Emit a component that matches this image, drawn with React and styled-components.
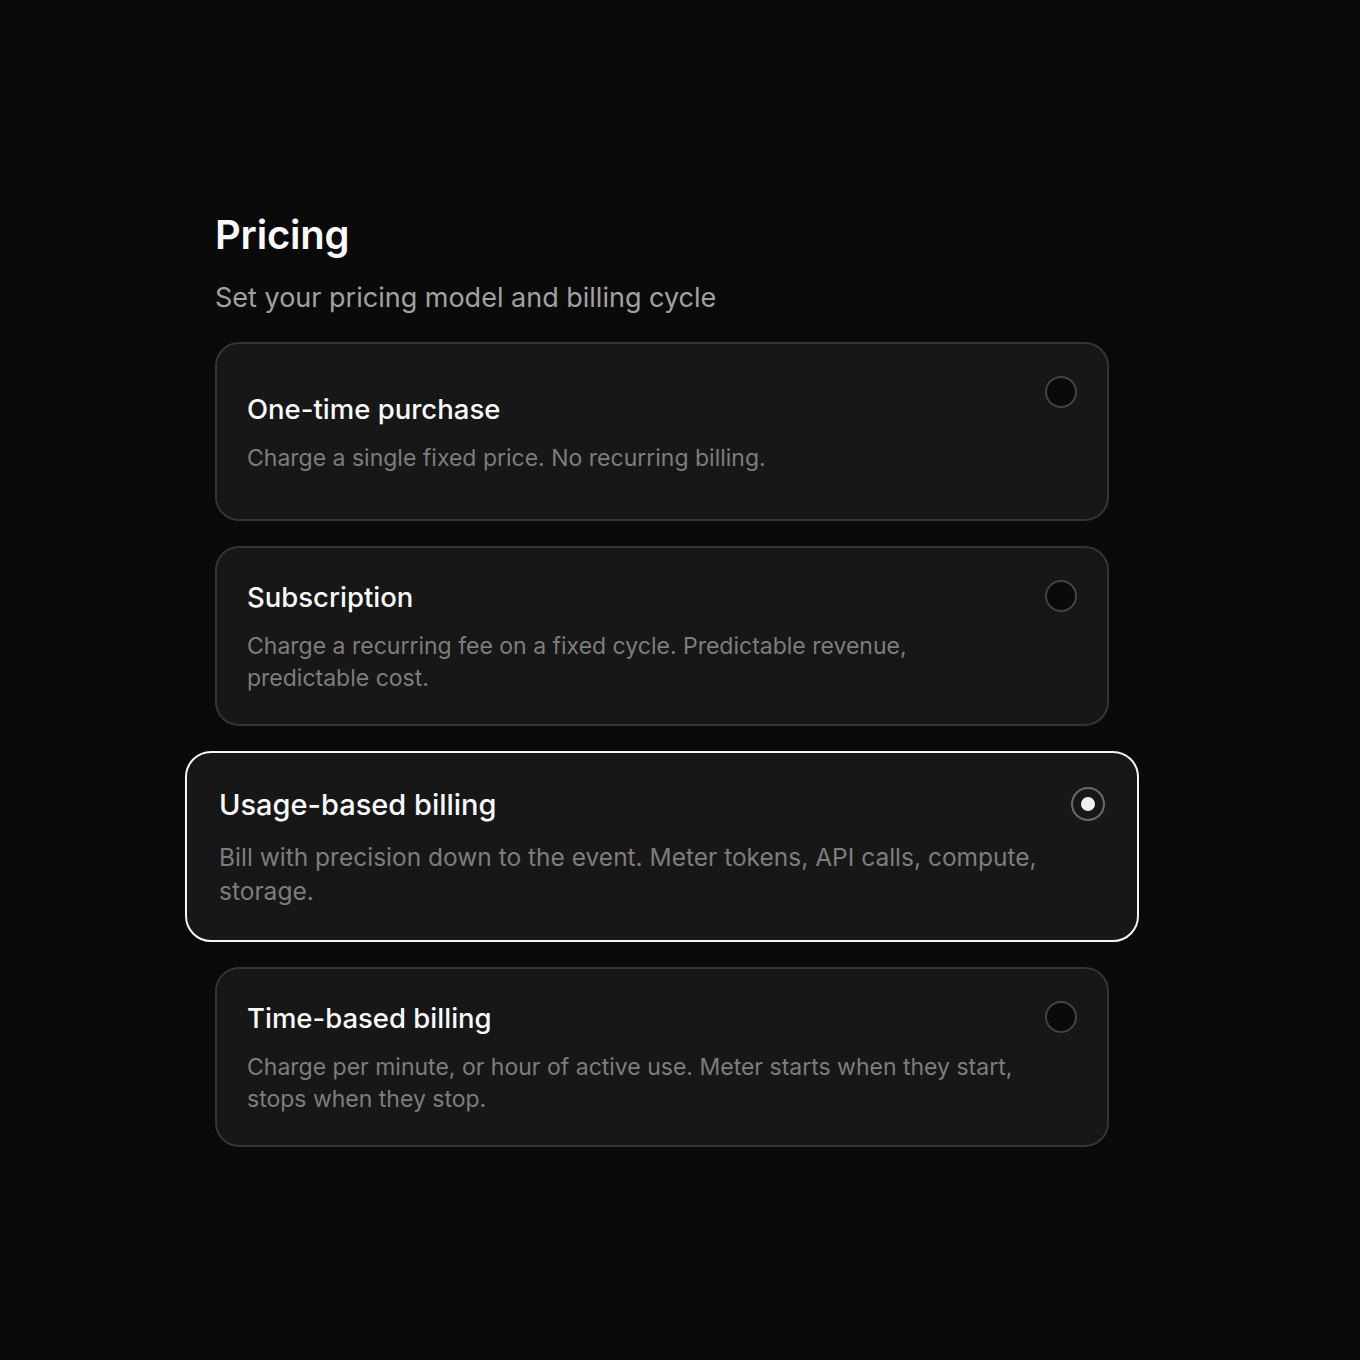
import React, { useState } from "react";
import styled, { createGlobalStyle, css } from "styled-components";

const GlobalStyle = createGlobalStyle`
  html, body {
    margin: 0;
    background: #0a0a0a;
  }
  body {
    font-family: Inter, "Noto Sans", sans-serif;
    -webkit-font-smoothing: antialiased;
  }
`;

const Page = styled.div`
  min-height: 1360px;
  padding: 211px 0 0 215px;
  box-sizing: border-box;
`;

const Section = styled.section`
  width: 894px;
`;

const Heading = styled.h1`
  margin: 0;
  font-size: 40px;
  line-height: 48px;
  font-weight: 600;
  color: #fafafa;
  letter-spacing: -0.2px;
`;

const Subtitle = styled.p`
  margin: 22px 0 27px;
  font-size: 27px;
  line-height: 34px;
  color: #a1a1a1;
`;

const List = styled.div`
  display: flex;
  flex-direction: column;
  gap: 25px;
`;

const Card = styled.label`
  display: flex;
  align-items: flex-start;
  gap: 24px;
  box-sizing: border-box;
  min-height: 179px;
  padding: 31px 30px 30px;
  border: 2px solid #353535;
  border-radius: 24px;
  background: #171717;
  cursor: pointer;

  ${({ $active }) =>
    $active &&
    css`
      margin: 0 -30px;
      min-height: 191px;
      padding: 33px 32px 32px;
      border-color: #f5f5f5;
      border-radius: 26px;
    `}
`;

const Body = styled.div`
  flex: 1;
  align-self: stretch;
  display: flex;
  flex-direction: column;
  justify-content: center;
`;

const Title = styled.h3`
  margin: 0 0 15px;
  font-size: 27.5px;
  line-height: 36px;
  font-weight: 500;
  color: #fafafa;

  ${({ $active }) =>
    $active &&
    css`
      margin-bottom: 16px;
      font-size: 29px;
      line-height: 38px;
    `}
`;

const Desc = styled.p`
  margin: 0;
  max-width: 775px;
  font-size: 23px;
  line-height: 32px;
  color: #7d7d7d;

  ${({ $active }) =>
    $active &&
    css`
      max-width: 840px;
      font-size: 24.5px;
      line-height: 34px;
    `}
`;

const Radio = styled.span`
  flex: none;
  position: relative;
  width: 32px;
  height: 32px;
  margin-top: 1px;
  box-sizing: border-box;
  border: 2px solid #444;
  border-radius: 50%;
  background: #0a0a0a;

  ${({ $active }) =>
    $active &&
    css`
      width: 34px;
      height: 34px;
      border-color: #6a6a6a;
      background: #171717;

      &::after {
        content: "";
        position: absolute;
        top: 50%;
        left: 50%;
        width: 14px;
        height: 14px;
        border-radius: 50%;
        background: #f0f0f0;
        transform: translate(-50%, -50%);
      }
    `}
`;

const options = [
  {
    id: "one-time",
    title: "One-time purchase",
    desc: "Charge a single fixed price. No recurring billing.",
  },
  {
    id: "subscription",
    title: "Subscription",
    desc: "Charge a recurring fee on a fixed cycle. Predictable revenue, predictable cost.",
  },
  {
    id: "usage",
    title: "Usage-based billing",
    desc: "Bill with precision down to the event. Meter tokens, API calls, compute, storage.",
  },
  {
    id: "time",
    title: "Time-based billing",
    desc: "Charge per minute, or hour of active use. Meter starts when they start, stops when they stop.",
  },
];

const App = () => {
  const [selected, setSelected] = useState("usage");

  return (
    <Page>
      <GlobalStyle />
      <Section>
        <Heading>Pricing</Heading>
        <Subtitle>Set your pricing model and billing cycle</Subtitle>
        <List>
          {options.map((o) => {
            const active = o.id === selected;
            return (
              <Card key={o.id} $active={active} onClick={() => setSelected(o.id)}>
                <Body>
                  <Title $active={active}>{o.title}</Title>
                  <Desc $active={active}>{o.desc}</Desc>
                </Body>
                <Radio $active={active} />
              </Card>
            );
          })}
        </List>
      </Section>
    </Page>
  );
};

export default App;
